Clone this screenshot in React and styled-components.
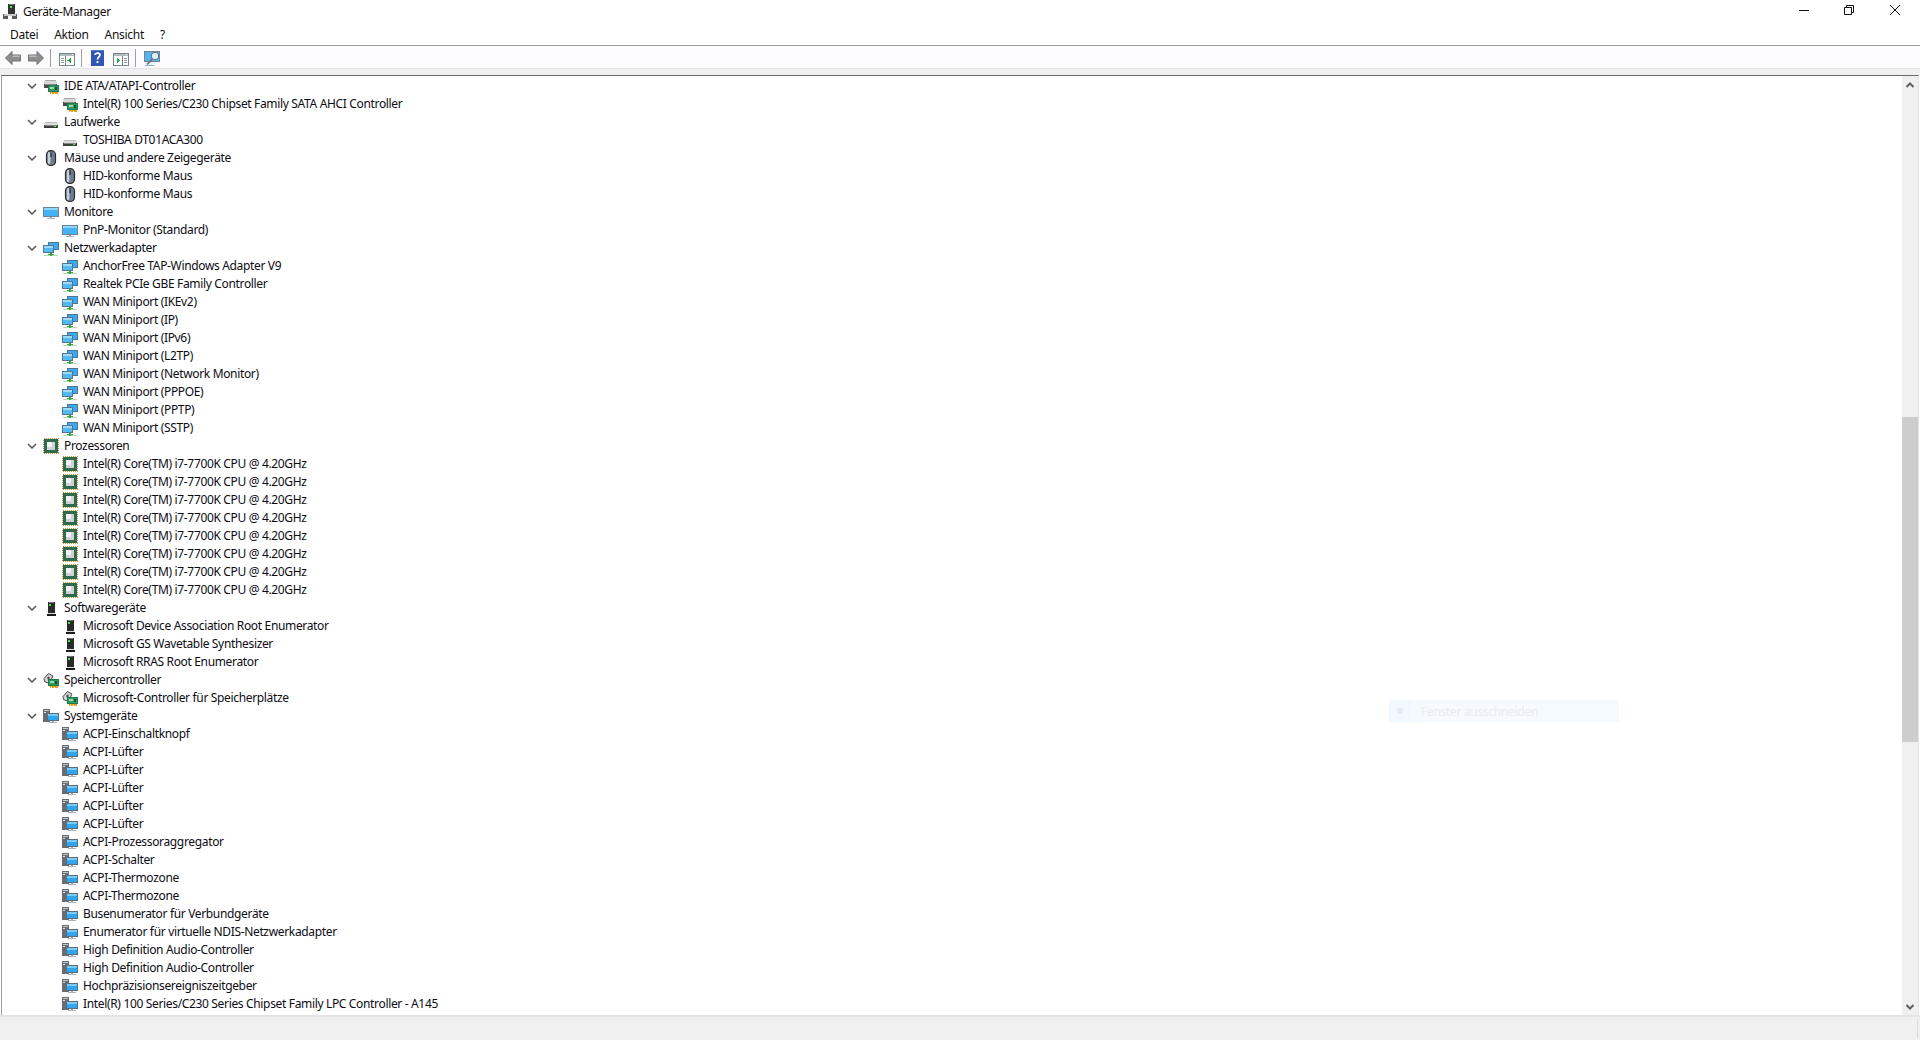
import React from "react";
import styled, { createGlobalStyle } from "styled-components";

const Global = createGlobalStyle`
  html, body { margin: 0; padding: 0; background: #fff; overflow: hidden; }
  body { font-family: "Noto Sans", "Open Sans", Arial, sans-serif; font-size: 12px; color: #0c0c14; }
`;

const Win = styled.div`
  width: 1920px; height: 1040px; display: flex; flex-direction: column; position: relative; overflow: hidden; background: #fff;
`;
const TitleBar = styled.div`
  height: 23px; display: flex; align-items: center; padding-left: 3px; flex: none;
`;
const TitleText = styled.span`
  margin-left: 4px; font-size: 12px; letter-spacing: -0.36px; color: #111;
`;
const WinButtons = styled.div`
  margin-left: auto; margin-right: 2px; display: flex; align-self: flex-start;
`;
const WinButton = styled.div`
  width: 46px; height: 20px; display: flex; align-items: center; justify-content: center;
`;
const WinGlyph = styled.svg`
  display: block; overflow: visible;
`;
const MenuBar = styled.div`
  height: 22px; display: flex; align-items: center; padding-left: 10px; gap: 16px; flex: none;
  border-bottom: 1px solid #a0a0a0;
`;
const MenuItem = styled.span`
  font-size: 12px; letter-spacing: -0.3px; color: #111;
`;
const Toolbar = styled.div`
  height: 20px; padding-top: 2px; display: flex; align-items: center; padding-left: 5px; background: #fcfcff; flex: none;
`;
const ToolIcon = styled.div`
  width: 16px; height: 16px; display: flex; margin-left: ${p => p.$ml}px;
`;
const ToolSep = styled.div`
  width: 1px; height: 18px; background: #a0a0a0; margin-left: ${p => p.$ml}px;
`;
const Band = styled.div`
  height: 7px; background: #f0f0f0; border-top: 1px solid #e4e4e4; box-sizing: border-box; flex: none;
`;
const Body = styled.div`
  flex: 1; min-height: 0; display: flex; padding-left: 1px; padding-right: 1px; background: #fff;
`;
const Tree = styled.div`
  flex: 1; min-width: 0; background: #fff; border-top: 1px solid #696969; border-left: 1px solid #a0a0a0; border-right: 1px solid #e3e3e3; display: flex; min-height: 0;
`;
const TreeList = styled.div`
  flex: 1; min-width: 0; overflow: hidden; padding-top: 1px;
`;
const Row = styled.div`
  height: 18px; display: flex; align-items: center; padding-left: ${p => (p.$child ? 60 : 22)}px; white-space: nowrap;
`;
const Caret = styled.div`
  width: 16px; height: 16px; margin-right: 3px; flex: none; display: flex; align-items: center; justify-content: center;
`;
const IconSlot = styled.div`
  width: 16px; height: 16px; flex: none; display: flex;
`;
const Label = styled.span`
  margin-left: 5px; font-size: 12px; letter-spacing: -0.34px; line-height: 18px; color: #0c0c14;
`;
const Scrollbar = styled.div`
  width: 16px; flex: none; background: #f0f0f0; display: flex; flex-direction: column; align-items: stretch; position: relative;
`;
const ScrollBtn = styled.div`
  height: 17px; flex: none; display: flex; align-items: center; justify-content: center;
`;
const ScrollTrack = styled.div`
  flex: 1; min-height: 0; padding-top: 324px;
`;
const Thumb = styled.div`
  height: 325px; background: #cdcdcd;
`;
const Divider = styled.div`
  height: 2px; background: #e3e3e3; flex: none;
`;
const StatusBar = styled.div`
  height: 23px; background: #f0f0f0; flex: none; display: flex; justify-content: flex-end; padding-right: 2px;
`;
const Grip = styled.div`
  width: 1px; margin: 2px 0; background: #dcdcdc;
`;
const Ghost = styled.div`
  position: absolute; left: 1389px; top: 700px; width: 230px; height: 22px; background: #f5faff; display: flex; align-items: center;
`;
const GhostIcon = styled.div`
  width: 22px; height: 22px; background: #f2f8ff; display: flex; align-items: center; justify-content: center; flex: none;
`;
const GhostDot = styled.div`
  width: 6px; height: 6px; border-radius: 50%; background: #e6e8ec;
`;
const GhostText = styled.span`
  margin-left: 10px; font-size: 12px; letter-spacing: -0.3px; color: #e9ebee;
`;

const Svg = ({ children, s = 16 }) => (
  <svg width={s} height={s} viewBox="0 0 16 16" style={{ display: "block", overflow: "visible" }}>{children}</svg>
);

const Board = () => (
  <g shapeRendering="crispEdges">
    <rect x="5" y="7" width="11" height="7" fill="#1f7a4a" />
    <rect x="6" y="8" width="9" height="5" fill="#2f9a62" />
    <rect x="7" y="9" width="4" height="2" fill="#9ad8b0" />
    <rect x="12" y="9" width="2" height="3" fill="#14502f" />
    <rect x="7" y="14" width="8" height="2" fill="#e8a020" />
    <rect x="8" y="15" width="1" height="1" fill="#fff" />
    <rect x="11" y="15" width="1" height="1" fill="#fff" />
  </g>
);
const IdeIcon = () => (
  <Svg>
    <g shapeRendering="crispEdges">
      <rect x="2" y="2" width="11" height="1" fill="#a8a8a8" />
      <rect x="1" y="3" width="13" height="3" fill="#d8d8d8" />
      <rect x="1" y="6" width="13" height="4" fill="#4a4a4a" />
      <rect x="2" y="6" width="11" height="1" fill="#8c8c8c" />
    </g>
    <Board />
  </Svg>
);
const DriveIcon = () => (
  <Svg>
    <g shapeRendering="crispEdges">
      <rect x="2" y="8" width="12" height="1" fill="#bdbdbd" />
      <rect x="1" y="9" width="14" height="2" fill="#dcdcdc" />
      <rect x="1" y="11" width="14" height="3" fill="#3e3e3e" />
      <rect x="2" y="11" width="12" height="1" fill="#8a8a8a" />
      <rect x="11" y="12" width="2" height="1" fill="#5fe05f" />
    </g>
  </Svg>
);
const MouseIcon = () => (
  <Svg>
    <rect x="3.5" y="0.7" width="9" height="14.8" rx="4.3" fill="#6c7d92" stroke="#2a2a2a" strokeWidth="1.2" />
    <rect x="4.8" y="2" width="2.6" height="12" rx="1.3" fill="#c5ced9" />
    <rect x="7.4" y="2.5" width="1.3" height="4.5" fill="#2a2a2a" />
  </Svg>
);
const MonitorIcon = () => (
  <Svg>
    <g shapeRendering="crispEdges">
      <rect x="0" y="3" width="16" height="10" fill="#6d8494" />
      <rect x="1" y="4" width="14" height="8" fill="#45b2f4" />
      <rect x="1" y="4" width="14" height="2" fill="#8fd6fc" />
      <rect x="7" y="13" width="2" height="1" fill="#9aa6ae" />
      <rect x="4" y="14" width="8" height="1" fill="#aab4ba" />
    </g>
  </Svg>
);
const NetIcon = () => (
  <Svg>
    <g shapeRendering="crispEdges">
      <rect x="5" y="2" width="11" height="8" fill="#4d7894" />
      <rect x="6" y="3" width="9" height="6" fill="#3fa8ec" />
      <rect x="0" y="5" width="11" height="8" fill="#4d7894" />
      <rect x="1" y="6" width="9" height="6" fill="#55b9f4" />
      <rect x="1" y="6" width="9" height="2" fill="#a0dcfa" />
      <rect x="1" y="15" width="14" height="1" fill="#b6d8b6" />
      <rect x="7" y="13" width="2" height="3" fill="#3ea53e" />
      <rect x="5" y="14" width="6" height="1" fill="#3ea53e" />
    </g>
  </Svg>
);
const CpuIcon = () => (
  <Svg>
    <g shapeRendering="crispEdges">
      <rect x="1" y="1" width="14" height="14" fill="#2f6a4e" />
      <rect x="0.5" y="0.5" width="15" height="15" fill="none" stroke="#c79a3a" strokeDasharray="1 1" />
      <rect x="4" y="4" width="8" height="8" fill="#cfd3d0" />
      <rect x="4" y="4" width="5" height="5" fill="#f1f2f1" />
    </g>
  </Svg>
);
const SoftIcon = () => (
  <Svg>
    <g shapeRendering="crispEdges">
      <rect x="5" y="2" width="7" height="11" fill="#2a2a2a" />
      <rect x="6" y="2" width="5" height="1" fill="#7a7a7a" />
      <rect x="6" y="4" width="2" height="2" fill="#49e049" />
      <rect x="5" y="13" width="7" height="1" fill="#dcdcdc" />
      <rect x="4" y="14" width="9" height="2" fill="#1a1a1a" />
    </g>
  </Svg>
);
const StorageIcon = () => (
  <Svg>
    <path d="M1 6.5 L5.5 1.5 L10 4 L8 8 L5 11 L1.5 9.5Z" fill="#d4d4d4" stroke="#4a4a4a" strokeWidth="1" />
    <path d="M4 6 H7 M5.5 4.5 V8" stroke="#4a4a4a" strokeWidth="1.2" />
    <Board />
  </Svg>
);
const SystemIcon = () => (
  <Svg>
    <g shapeRendering="crispEdges">
      <rect x="0" y="1" width="7" height="13" fill="#666c72" />
      <rect x="1" y="2" width="5" height="1" fill="#c4c8cc" />
      <rect x="1" y="4" width="2" height="1" fill="#dfe3e6" />
      <rect x="4" y="5" width="12" height="8" fill="#5d6d79" />
      <rect x="5" y="6" width="10" height="6" fill="#2fa6f2" />
      <rect x="5" y="6" width="10" height="2" fill="#79cbf8" />
      <rect x="9" y="13" width="2" height="1" fill="#a0a8ae" />
      <rect x="6" y="14" width="8" height="1" fill="#aab4ba" />
    </g>
  </Svg>
);
const CaretIcon = () => (
  <svg width="10" height="6" viewBox="0 0 10 6" style={{ display: "block" }}>
    <path d="M1 1 L5 5 L9 1" fill="none" stroke="#555" strokeWidth="1.5" />
  </svg>
);
const ArrowIcon = ({ dir }) => (
  <Svg>
    <path
      d="M0.5 8 L7 1.5 V5 H15.5 V11 H7 V14.5Z"
      fill="#8e8e8e"
      stroke="#707070"
      strokeWidth="1"
      transform={dir === "r" ? "matrix(-1 0 0 1 16 0)" : undefined}
    />
    <path
      d="M7.5 5.5 H15 V7 H7.5Z"
      fill="#bcbcbc"
      transform={dir === "r" ? "matrix(-1 0 0 1 16 0)" : undefined}
    />
  </Svg>
);
const PaneIcon = ({ dir }) => (
  <Svg>
    <g shapeRendering="crispEdges">
      <rect x="0.5" y="3.5" width="15" height="12" fill="#fff" stroke="#76858a" />
      <rect x="1" y="4" width="14" height="2" fill="#b0bcc0" />
      <rect x="13" y="4" width="1" height="1" fill="#fff" />
      {dir === "l" ? (
        <>
          <rect x="2" y="8" width="3" height="1" fill="#8a979b" />
          <rect x="2" y="10" width="3" height="1" fill="#8a979b" />
          <rect x="2" y="12" width="3" height="1" fill="#8a979b" />
          <rect x="6" y="6" width="1" height="9" fill="#76858a" />
          <path d="M12 7.5 V13.5 L8.5 10.5Z" fill="#27a83a" />
        </>
      ) : (
        <>
          <rect x="11" y="8" width="3" height="1" fill="#8a979b" />
          <rect x="11" y="10" width="3" height="1" fill="#8a979b" />
          <rect x="11" y="12" width="3" height="1" fill="#8a979b" />
          <rect x="9" y="6" width="1" height="9" fill="#76858a" />
          <path d="M4 7.5 V13.5 L7.5 10.5Z" fill="#27a83a" />
        </>
      )}
    </g>
  </Svg>
);
const HelpIcon = () => (
  <svg width="13" height="16" viewBox="0 0 13 16" style={{ display: "block" }}>
    <rect width="13" height="16" fill="#2f55b5" />
    <rect x="0" y="0" width="13" height="1" fill="#5577cc" />
    <path d="M4 5 C4 2.5 9 2.5 9 5 C9 7 6.5 7 6.5 9.5" fill="none" stroke="#fff" strokeWidth="1.7" />
    <rect x="5.6" y="11" width="1.8" height="2" fill="#fff" />
  </svg>
);
const ScanIcon = () => (
  <Svg>
    <rect x="0.5" y="1.5" width="15" height="10" fill="#55b4ec" stroke="#6d8595" />
    <rect x="1" y="15" width="10" height="1" fill="#8fb8d0" />
    <circle cx="11" cy="6" r="3.8" fill="#d5eefc" stroke="#667" strokeWidth="1" />
    <path d="M8.2 8.8 L3 14.5" stroke="#707070" strokeWidth="1.8" />
  </Svg>
);
const TitleIcon = () => (
  <Svg>
    <g shapeRendering="crispEdges">
      <rect x="5" y="0" width="7" height="10" fill="#333" />
      <rect x="6" y="0" width="5" height="1" fill="#777" />
      <rect x="7" y="2" width="2" height="2" fill="#5ae05a" />
      <rect x="0" y="10" width="14" height="5" fill="#5a5a5a" />
      <rect x="1" y="10" width="12" height="2" fill="#c8c8c8" />
      <rect x="5" y="12" width="4" height="3" fill="#fff" />
    </g>
  </Svg>
);

const cpu = "Intel(R) Core(TM) i7-7700K CPU @ 4.20GHz";
const groups = [
  { name: "IDE ATA/ATAPI-Controller", Icon: IdeIcon, items: ["Intel(R) 100 Series/C230 Chipset Family SATA AHCI Controller"] },
  { name: "Laufwerke", Icon: DriveIcon, items: ["TOSHIBA DT01ACA300"] },
  { name: "Mäuse und andere Zeigegeräte", Icon: MouseIcon, items: ["HID-konforme Maus", "HID-konforme Maus"] },
  { name: "Monitore", Icon: MonitorIcon, items: ["PnP-Monitor (Standard)"] },
  { name: "Netzwerkadapter", Icon: NetIcon, items: [
    "AnchorFree TAP-Windows Adapter V9", "Realtek PCIe GBE Family Controller", "WAN Miniport (IKEv2)", "WAN Miniport (IP)",
    "WAN Miniport (IPv6)", "WAN Miniport (L2TP)", "WAN Miniport (Network Monitor)", "WAN Miniport (PPPOE)", "WAN Miniport (PPTP)", "WAN Miniport (SSTP)",
  ] },
  { name: "Prozessoren", Icon: CpuIcon, items: [cpu, cpu, cpu, cpu, cpu, cpu, cpu, cpu] },
  { name: "Softwaregeräte", Icon: SoftIcon, items: ["Microsoft Device Association Root Enumerator", "Microsoft GS Wavetable Synthesizer", "Microsoft RRAS Root Enumerator"] },
  { name: "Speichercontroller", Icon: StorageIcon, items: ["Microsoft-Controller für Speicherplätze"] },
  { name: "Systemgeräte", Icon: SystemIcon, items: [
    "ACPI-Einschaltknopf", "ACPI-Lüfter", "ACPI-Lüfter", "ACPI-Lüfter", "ACPI-Lüfter", "ACPI-Lüfter", "ACPI-Prozessoraggregator", "ACPI-Schalter",
    "ACPI-Thermozone", "ACPI-Thermozone", "Busenumerator für Verbundgeräte", "Enumerator für virtuelle NDIS-Netzwerkadapter",
    "High Definition Audio-Controller", "High Definition Audio-Controller", "Hochpräzisionsereigniszeitgeber", "Intel(R) 100 Series/C230 Series Chipset Family LPC Controller - A145",
  ] },
];

export default function App() {
  return (
    <Win>
      <Global />
      <TitleBar>
        <IconSlot><TitleIcon /></IconSlot>
        <TitleText>Geräte-Manager</TitleText>
        <WinButtons>
          <WinButton><WinGlyph width="10" height="10" viewBox="-1 0 10 10"><path d="M0 5.5H10" stroke="#111" /></WinGlyph></WinButton>
          <WinButton><WinGlyph width="10" height="10" viewBox="0 0 10 10"><path d="M2.5 2.5V.5H9.5V7.5H7.5M.5 2.5H7.5V9.5H.5Z" fill="none" stroke="#111" /></WinGlyph></WinButton>
          <WinButton><WinGlyph width="10" height="10" viewBox="0 0 10 10"><path d="M0 0L10 10M10 0L0 10" stroke="#111" /></WinGlyph></WinButton>
        </WinButtons>
      </TitleBar>
      <MenuBar>
        <MenuItem>Datei</MenuItem>
        <MenuItem>Aktion</MenuItem>
        <MenuItem>Ansicht</MenuItem>
        <MenuItem>?</MenuItem>
      </MenuBar>
      <Toolbar>
        <ToolIcon $ml={0}><ArrowIcon dir="l" /></ToolIcon>
        <ToolIcon $ml={7}><ArrowIcon dir="r" /></ToolIcon>
        <ToolSep $ml={6} />
        <ToolIcon $ml={8}><PaneIcon dir="l" /></ToolIcon>
        <ToolSep $ml={6} />
        <ToolIcon $ml={9}><HelpIcon /></ToolIcon>
        <ToolIcon $ml={6}><PaneIcon dir="r" /></ToolIcon>
        <ToolSep $ml={6} />
        <ToolIcon $ml={8}><ScanIcon /></ToolIcon>
      </Toolbar>
      <Band />
      <Body>
        <Tree>
          <TreeList>
            {groups.map(g => (
              <React.Fragment key={g.name}>
                <Row>
                  <Caret><CaretIcon /></Caret>
                  <IconSlot><g.Icon /></IconSlot>
                  <Label>{g.name}</Label>
                </Row>
                {g.items.map((it, i) => (
                  <Row $child key={i}>
                    <IconSlot><g.Icon /></IconSlot>
                    <Label>{it}</Label>
                  </Row>
                ))}
              </React.Fragment>
            ))}
          </TreeList>
          <Scrollbar>
            <ScrollBtn><svg width="8" height="6" viewBox="0 0 8 6"><path d="M.5 5L4 1.5L7.5 5" fill="none" stroke="#606060" strokeWidth="2" /></svg></ScrollBtn>
            <ScrollTrack><Thumb /></ScrollTrack>
            <ScrollBtn><svg width="8" height="6" viewBox="0 0 8 6"><path d="M.5 1L4 4.5L7.5 1" fill="none" stroke="#606060" strokeWidth="2" /></svg></ScrollBtn>
          </Scrollbar>
        </Tree>
      </Body>
      <Divider />
      <StatusBar><Grip /></StatusBar>
      <Ghost>
        <GhostIcon><GhostDot /></GhostIcon>
        <GhostText>Fenster ausschneiden</GhostText>
      </Ghost>
    </Win>
  );
}
